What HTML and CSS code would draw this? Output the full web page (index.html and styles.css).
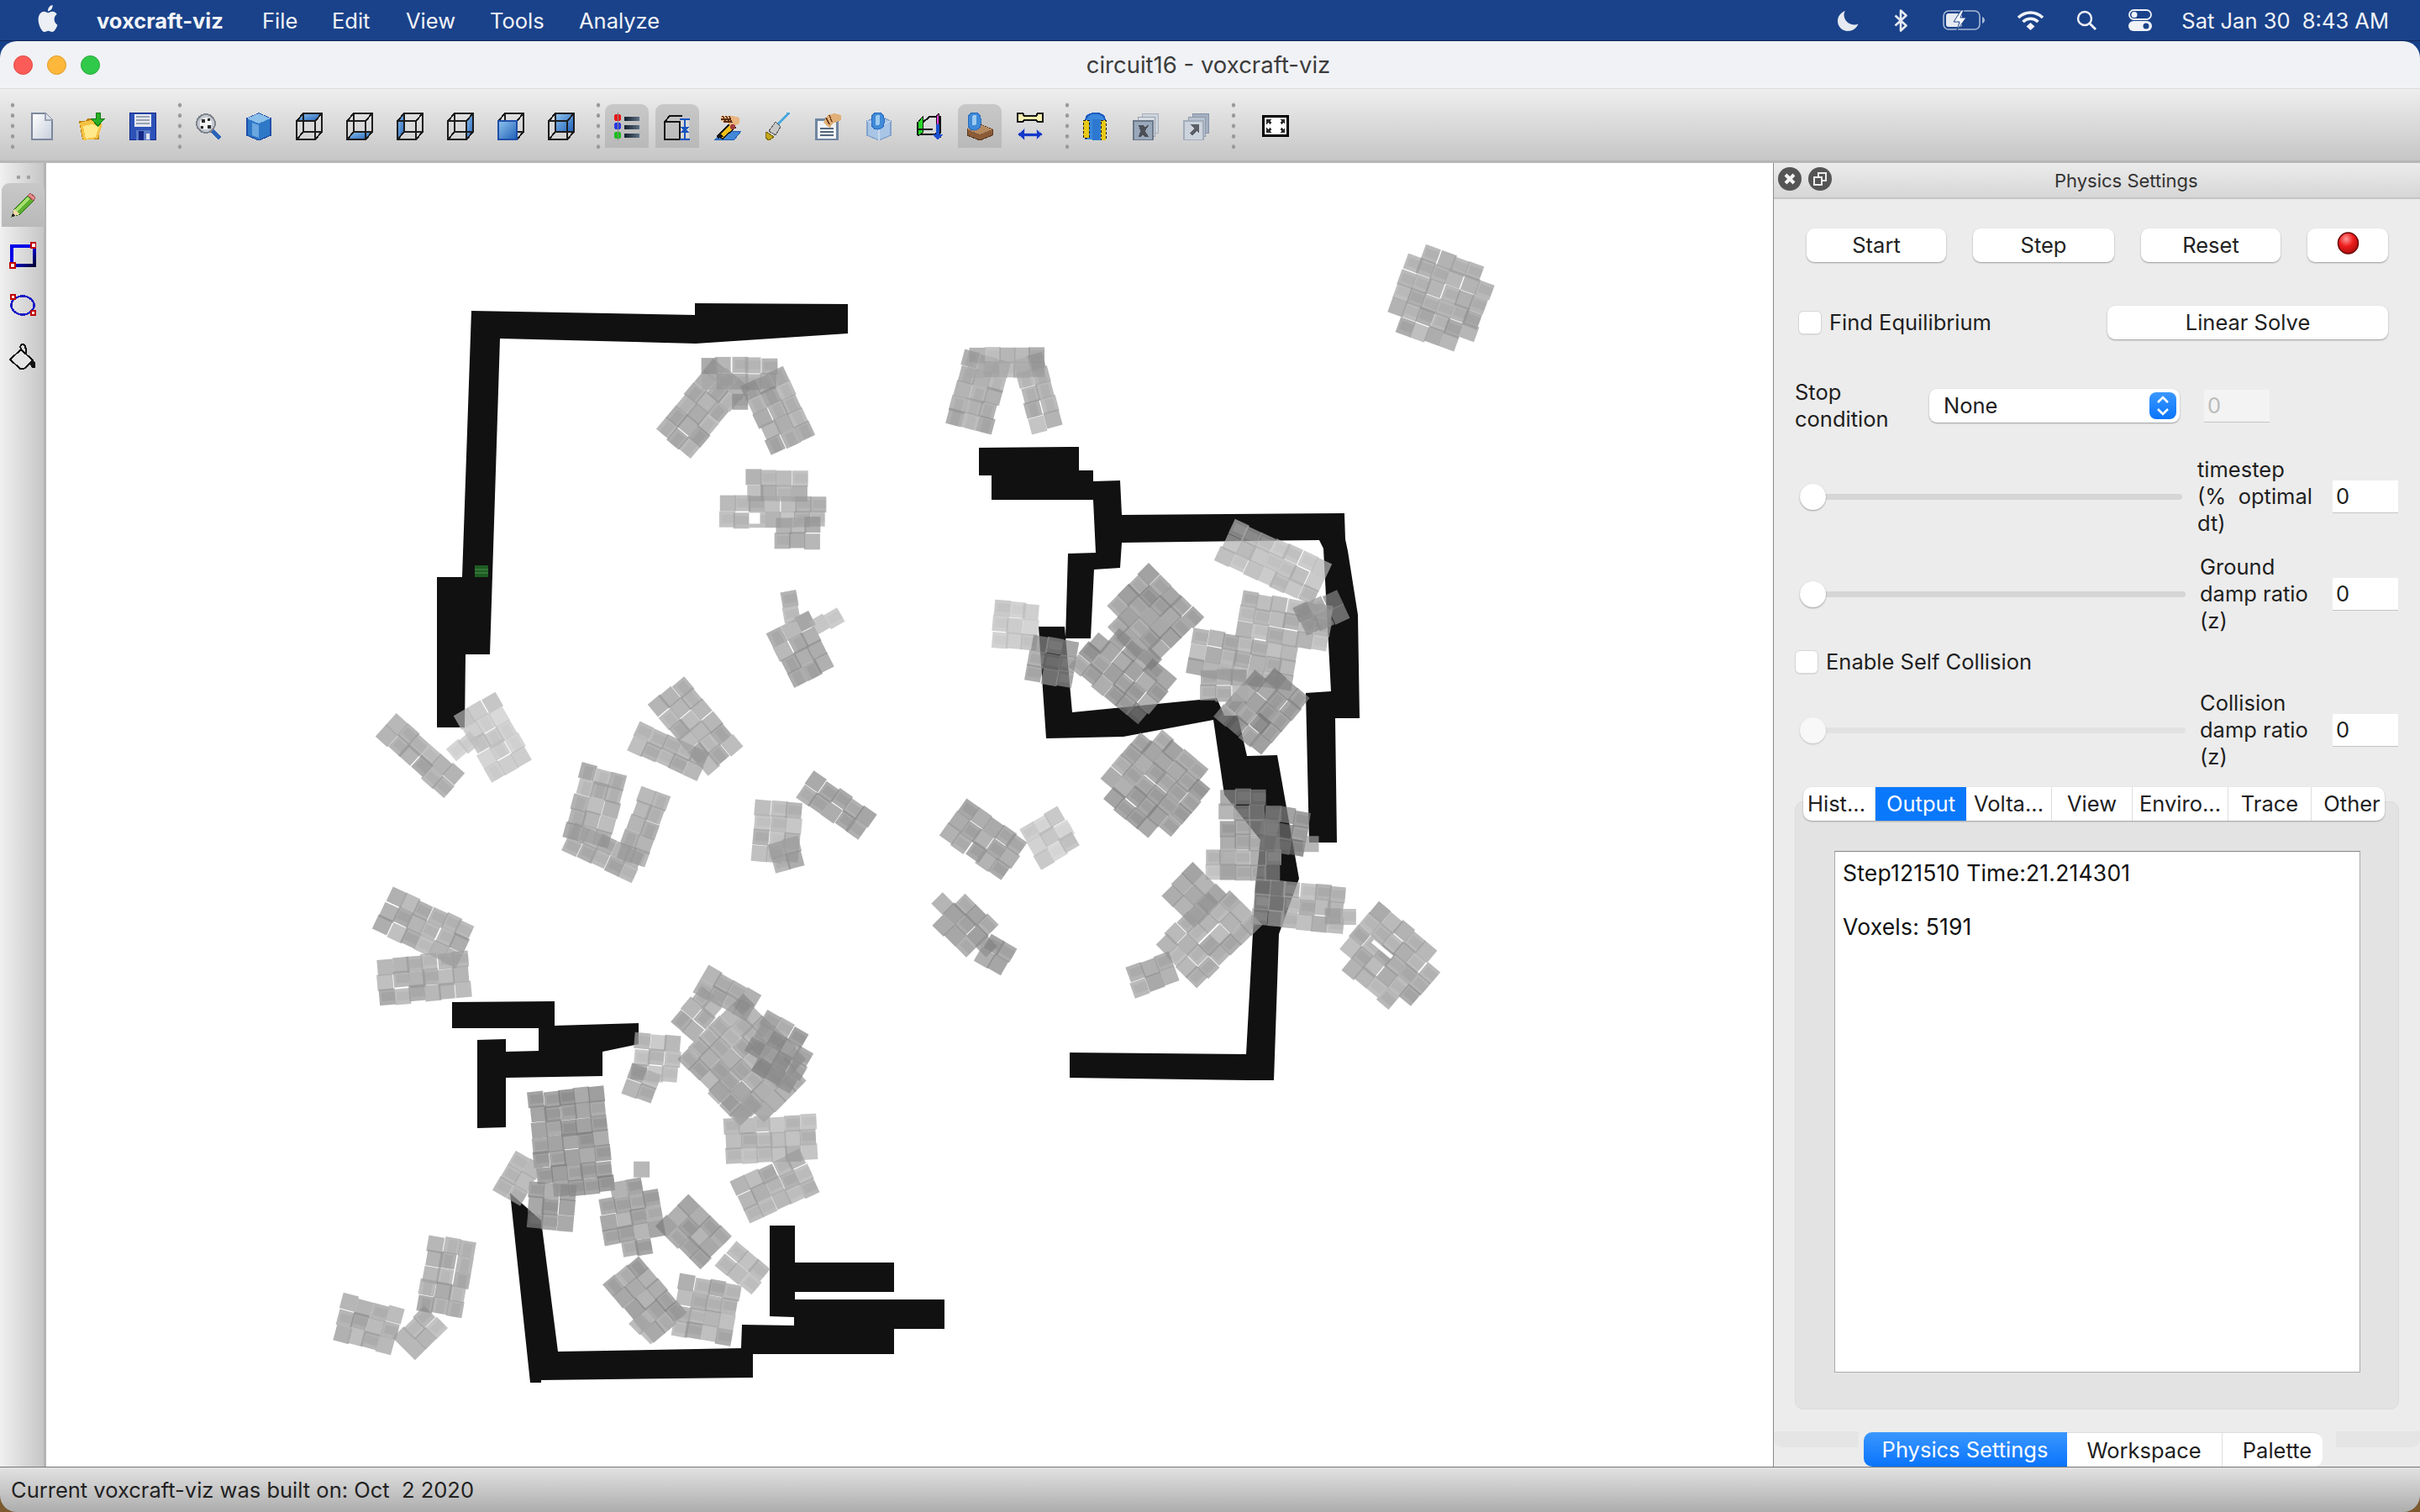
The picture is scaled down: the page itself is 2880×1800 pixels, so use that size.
FILE: index.html
```html
<!DOCTYPE html>
<html>
<head>
  <title>circuit16 - voxcraft-viz</title>
  <link rel="stylesheet" href="styles.css">
</head>
<body>

<!-- Shared icon shapes -->
<svg class="icon-defs" width="0" height="0">
  <defs>
    <linearGradient id="gBlue" x1="0" y1="0" x2="1" y2="1"><stop offset="0" stop-color="#8fc4ee"/><stop offset="1" stop-color="#1f5fb8"/></linearGradient>
    <linearGradient id="gPage" x1="0" y1="0" x2="1" y2="1"><stop offset="0" stop-color="#ffffff"/><stop offset="1" stop-color="#c6cfdc"/></linearGradient>
    <linearGradient id="gBar" x1="0" y1="0" x2="1" y2="0"><stop offset="0" stop-color="#12202e"/><stop offset="1" stop-color="#5d7084"/></linearGradient>
    <linearGradient id="gBlueBtn" x1="0" y1="0" x2="0" y2="1"><stop offset="0" stop-color="#3a97ff"/><stop offset="1" stop-color="#0a74fb"/></linearGradient>
    <linearGradient id="gRect" x1="0" y1="0" x2="1" y2="1"><stop offset="0.5" stop-color="#0000e8"/><stop offset="1" stop-color="#00003a"/></linearGradient>
    <radialGradient id="gRed" cx="0.4" cy="0.3" r="0.8"><stop offset="0" stop-color="#ff9a9a"/><stop offset="0.45" stop-color="#ee1c1c"/><stop offset="1" stop-color="#a00808"/></radialGradient>

    <g id="wire">
      <path d="M1 10h22v22H1zM9 1h22v22H9zM1 10l8-9M23 10l8-9M23 32l8-9M1 32l8-9" fill="none" stroke="#1c1c1c" stroke-width="2"/>
    </g>
    <symbol id="i-new" viewBox="0 0 32 33"><path d="M4 1h16l8 8v23H4z" fill="url(#gPage)" stroke="#7c879c" stroke-width="2"/><path d="M20 1v8h8" fill="#dfe3ea" stroke="#9aa3b4" stroke-width="1.5"/></symbol>
    <symbol id="i-open" viewBox="0 0 32 33">
      <path d="M0 10h8l2-3h14v25H4z" fill="#b9800f"/><path d="M1 12l13-3 14 5-6 17-17 2z" fill="#f5c343"/><path d="M5 16l10-2 9 3-4 12-12 2z" fill="#ffe98a"/>
      <path d="M20 0h5v7h6l-8.500 9-8.500-9h6z" fill="#27b027" stroke="#127a12"/>
    </symbol>
    <symbol id="i-save" viewBox="0 0 32 33">
      <rect x="0.5" y="0.5" width="31" height="32" fill="#2c52b8" stroke="#14298c"/><rect x="6" y="2" width="20" height="15" fill="#e4e8f0"/>
      <path d="M8 5h16M8 9h16M8 13h16" stroke="#9aa2b2" stroke-width="2"/><rect x="8" y="21" width="17" height="12" fill="#5c7cc8"/><rect x="11" y="22" width="6" height="11" fill="#142a86"/><rect x="20" y="25" width="4" height="7" fill="#dfe4ee"/>
    </symbol>
    <symbol id="i-zoom" viewBox="0 0 32 33">
      <circle cx="13" cy="13" r="11" fill="#c4c8d0" stroke="#80848c" stroke-width="2"/><circle cx="13" cy="13" r="7" fill="#f4f4f4"/>
      <path d="M8 8h4v4H8zM15 15h4v4h-4zM15 7h3v3h-3zM7 16h3v3H7z" fill="#2c2c2c"/><path d="M21 22l9 9" stroke="#2a64b8" stroke-width="5"/>
    </symbol>
    <symbol id="i-cube" viewBox="0 0 32 33">
      <path d="M16 1l14 6v20l-14 6-14-6V7z" fill="#2f78c8" stroke="#1f4fa8" stroke-width="1.5"/><path d="M16 1l14 6-14 6-14-6z" fill="#8cc0ea"/><path d="M8 12l8 3v15l-8-3z" fill="#6aa6e0"/>
    </symbol>
    <symbol id="i-top" viewBox="0 0 32 33"><path d="M1 10l8-9h22l-8 9z" fill="url(#gBlue)"/><use href="#wire"/></symbol>
    <symbol id="i-bottom" viewBox="0 0 32 33"><path d="M1 32l8-9h22l-8 9z" fill="url(#gBlue)"/><use href="#wire"/></symbol>
    <symbol id="i-left" viewBox="0 0 32 33"><path d="M1 10l8-9v22l-8 9z" fill="url(#gBlue)"/><use href="#wire"/></symbol>
    <symbol id="i-right" viewBox="0 0 32 33"><path d="M23 10l8-9v22l-8 9z" fill="url(#gBlue)"/><use href="#wire"/></symbol>
    <symbol id="i-front" viewBox="0 0 32 33"><use href="#wire"/><rect x="1" y="10" width="22" height="22" fill="url(#gBlue)" stroke="#1f4fa8" stroke-width="2"/></symbol>
    <symbol id="i-back" viewBox="0 0 32 33"><rect x="9" y="1" width="22" height="22" fill="url(#gBlue)"/><use href="#wire"/></symbol>
    <symbol id="i-beads" viewBox="0 0 32 33">
      <circle cx="5" cy="6" r="4.5" fill="#e81818"/><circle cx="5" cy="16" r="4.5" fill="#2a3ae0"/><circle cx="5" cy="27" r="4.5" fill="#18c018"/><path d="M5 0v33" stroke="#888" stroke-width="1"/>
      <rect x="13" y="5" width="18" height="5" fill="url(#gBar)"/><rect x="13" y="15" width="18" height="5" fill="url(#gBar)"/><rect x="13" y="25" width="18" height="5" fill="url(#gBar)"/>
    </symbol>
    <symbol id="i-size" viewBox="0 0 32 33">
      <path d="M1 11l6-7h15M1 11h18v21H1z" fill="none" stroke="#141414" stroke-width="2"/><rect x="20" y="9" width="10" height="21" fill="#d8d8d8"/>
      <path d="M24 9h-5v-2h12v2h-5v8h4l-5 6-5-6h4zM19 31h12v2H19zM25 18l5 6h-4v7h-2v-7h-4z" fill="#1856c0"/>
    </symbol>
    <symbol id="i-hand" viewBox="0 0 32 33">
      <path d="M1 32l9-10h22l-8 10z" fill="#4288d8" stroke="#1f5cb0"/><path d="M4 28l15-15 6 5-15 13z" fill="#f0c018" stroke="#1c1c1c" stroke-width="1.5"/><path d="M4 28l4-3 3 4-7 2z" fill="#181818"/>
      <path d="M8 4h14l8 2v7l-10 5-4-6-8-2z" fill="#e8b480"/><path d="M10 4l4 7M14 4l4 7M18 4l3 8M8 8h12M11 11h9" stroke="#5c2c10" stroke-width="1.5"/><circle cx="22" cy="17" r="3" fill="#a03c3c"/>
    </symbol>
    <symbol id="i-brush" viewBox="0 0 32 33">
      <path d="M29 0L16 14" stroke="#4aa8dc" stroke-width="3"/><path d="M13 11l6 6-6 10-8-5z" fill="#c8c8c8" stroke="#5c5c5c"/><path d="M2 23l9 6-6 4-4-3z" fill="#c4a818" stroke="#7c6a0c"/>
    </symbol>
    <symbol id="i-note" viewBox="0 0 32 33">
      <rect x="1.5" y="8.5" width="25" height="24" fill="#f0f2f6" stroke="#6f86a0" stroke-width="2.5"/><path d="M6 19h16M6 23h16M6 27h16" stroke="#54687e" stroke-width="2"/>
      <path d="M10 12l5-9 8-2 8 2v6l-10 4-3 5-4-2z" fill="#e0b078"/><path d="M13 6l4 8M17 3l3 8" stroke="#6c3c1c" stroke-width="1.5"/>
    </symbol>
    <symbol id="i-vox" viewBox="0 0 32 33">
      <path d="M16 4l14 6v17l-14 6-14-6V10z" fill="#a9c5e6" stroke="#82a2cc" stroke-width="1.5"/><path d="M16 16l14-6M16 16v17M16 16L2 10" stroke="#c6d8ee" stroke-width="1.5"/>
      <rect x="7" y="0" width="15" height="20" rx="7" fill="#3f8ad8" stroke="#2a6cc0"/><rect x="12" y="3" width="5" height="12" rx="2" fill="#9ccaf0"/>
    </symbol>
    <symbol id="i-bc" viewBox="0 0 32 33">
      <path d="M2 12h6l8-7h13v19l-8 2H2z" fill="none" stroke="#141414" stroke-width="2"/><path d="M2 12l6-7v19l-6 4z" fill="#28d828" stroke="#141414"/><path d="M27 1l-3 4v24h5z" fill="#ee40dc" stroke="#141414"/>
      <path d="M24 14h4v12h4l-6 7-6-7h4z" fill="#1a4ed0"/><path d="M2 20h18" stroke="#141414" stroke-width="2"/>
    </symbol>
    <symbol id="i-mat" viewBox="0 0 32 33">
      <path d="M16 14l15 6v7l-15 6-15-6v-7z" fill="#8a5c38" stroke="#5c3a20"/><path d="M16 14l15 6-15 6-15-6z" fill="#b68a60"/>
      <rect x="2" y="0" width="15" height="21" rx="7" fill="#3f8ad8" stroke="#2a6cc0"/><rect x="7" y="3" width="5" height="12" rx="2" fill="#9ccaf0"/>
    </symbol>
    <symbol id="i-beam" viewBox="0 0 32 33">
      <path d="M1 1h6l2 3h14l2-3h6v10h-6l-2-2H9l-2 2H1z" fill="#f6f0b0" stroke="#141414" stroke-width="2"/>
      <path d="M1 26l8-7v5h14v-5l8 7-8 7v-5H9v5z" fill="#1438c8" stroke="#b8bcd8"/>
    </symbol>
    <symbol id="i-arch" viewBox="0 0 32 33">
      <path d="M4 32V10C4 3 10 1 16 1s11 2 11 9v23" fill="#3a88dc" stroke="#1d5cc0" stroke-width="2"/><rect x="12" y="8" width="9" height="25" fill="#2e78d0"/>
      <path d="M1 9h7v21H1zM22 9h6v24h-6z" fill="#e8c818" stroke="#1c1c1c" stroke-dasharray="3 2"/>
    </symbol>
    <symbol id="i-stack" viewBox="0 0 32 33">
      <rect x="11" y="1" width="19" height="23" fill="#cdd3dc" stroke="#a8b0bc"/><rect x="6" y="5" width="20" height="23" fill="#d8dde4" stroke="#9aa2ae"/><rect x="1" y="10" width="23" height="23" fill="#9aa8bc" stroke="#6c7888" stroke-width="2"/>
      <path d="M7 15h5l3 3 2-3h2l-4 7 4 7H14l-2-3-3 3H7l2-7z" fill="#4c5056"/>
    </symbol>
    <symbol id="i-stack2" viewBox="0 0 32 33">
      <rect x="11" y="1" width="19" height="23" fill="#a4b0c0" stroke="#8492a6"/><rect x="6" y="5" width="20" height="23" fill="#b8c2d0" stroke="#8e9aac"/><rect x="1" y="10" width="23" height="23" fill="#ccd3dc" stroke="#a2acba" stroke-width="2"/>
      <path d="M8 14h11v11l-3-3-5 6-3-3 5-6z" fill="#5c6066"/>
    </symbol>
    <symbol id="i-full" viewBox="0 0 32 26">
      <rect x="1.5" y="1.5" width="29" height="23" fill="#fff" stroke="#000" stroke-width="3"/>
      <path d="M5 5h6l-2 2 2 2-2 2-2-2-2 2zM27 5h-6l2 2-2 2 2 2 2-2 2 2zM5 21h6l-2-2 2-2-2-2-2 2-2-2zM27 21h-6l2-2-2-2 2-2 2 2 2-2z" fill="#2a2a2a"/>
    </symbol>
    <symbol id="i-pencil" viewBox="0 0 32 33">
      <path d="M3 30l3-9 16-16 7 6-16 16z" fill="#5cb030" stroke="#2c6c18"/><path d="M8 23L23 8" stroke="#a8e070" stroke-width="3"/><path d="M22 5l3-3 6 5-2 4z" fill="#e88c8c" stroke="#a05050"/><path d="M3 30l3-9 7 6z" fill="#f0d8a8"/><path d="M3 30l1-4 3 3z" fill="#222"/>
    </symbol>
    <symbol id="i-rect" viewBox="0 0 32 33">
      <rect x="2.5" y="4.500" width="27" height="23" fill="none" stroke="url(#gRect)" stroke-width="4"/>
      <rect x="26" y="1" width="6" height="6" fill="#fff" stroke="#c00000" stroke-width="2"/><rect x="1" y="25" width="6" height="6" fill="#fff" stroke="#c00000" stroke-width="2"/>
    </symbol>
    <symbol id="i-oval" viewBox="0 0 32 33">
      <ellipse cx="16" cy="15.500" rx="13.500" ry="11" fill="none" stroke="#1c1cc8" stroke-width="2.500"/>
      <rect x="2" y="3" width="5" height="5" fill="#fff" stroke="#c00000" stroke-width="2"/><rect x="26" y="22" width="5" height="5" fill="#fff" stroke="#c00000" stroke-width="2"/>
    </symbol>
    <symbol id="i-fill" viewBox="0 0 32 33">
      <path d="M1 20L14 8l14 13-9 9c-2 1-4 2-6 1z" fill="#e4e4e4" stroke="#111" stroke-width="2"/><path d="M14 8c-2-4 0-7 3-6s3 6 3 12" fill="none" stroke="#111" stroke-width="2"/><path d="M27 19l4 5v6h-4l-2-4z" fill="#111"/>
    </symbol>
  </defs>
</svg>

<div class="desktop">

  <!-- Menu bar -->
  <div class="menubar">
    <svg class="apple" viewBox="0 0 24 24" width="28" height="32" preserveAspectRatio="none"><path fill="#eceff4" d="M12.152 6.896c-.948 0-2.415-1.078-3.96-1.04-2.04.027-3.91 1.183-4.961 3.014-2.117 3.675-.546 9.103 1.519 12.09 1.013 1.454 2.208 3.09 3.792 3.039 1.52-.065 2.09-.987 3.935-.987 1.831 0 2.35.987 3.96.948 1.637-.026 2.676-1.48 3.676-2.948 1.156-1.688 1.636-3.325 1.662-3.415-.039-.013-3.182-1.221-3.22-4.857-.026-3.04 2.48-4.494 2.597-4.559-1.429-2.09-3.623-2.324-4.39-2.376-2-.156-3.675 1.09-4.61 1.09zM15.53 3.83c.843-1.012 1.4-2.427 1.245-3.83-1.207.052-2.662.805-3.532 1.818-.78.896-1.454 2.338-1.273 3.714 1.338.104 2.715-.688 3.559-1.701"/></svg>
    <span class="menu-app">voxcraft-viz</span>
    <span class="menu-item">File</span>
    <span class="menu-item">Edit</span>
    <span class="menu-item">View</span>
    <span class="menu-item">Tools</span>
    <span class="menu-item">Analyze</span>
    <div class="menu-status">
      <svg class="st-moon" width="25" height="25" viewBox="0 0 25 25"><path fill="#e6eaf2" d="M9 1C3.500 3 0 7.500 0 13c0 6.600 5.400 12 12 12 5.500 0 10.500-3.500 12.500-8.500-1.500.6-3 .9-4.500.9C13 17.400 7.500 12 7.500 5.400 7.500 3.800 8 2.300 9 1z"/></svg>
      <svg class="st-bt" width="17" height="27" viewBox="0 0 17 27"><path fill="none" stroke="#e6eaf2" stroke-width="2.600" stroke-linejoin="round" d="M1.500 7.500l13 12-6.500 6V1.500l6.500 6-13 12"/></svg>
      <svg width="50" height="24" viewBox="0 0 50 24">
        <rect x="1" y="1" width="43" height="22" rx="6" fill="none" stroke="#a9b8d6" stroke-width="1.600"/><path d="M47 8c2 1 3 2.500 3 4s-1 3-3 4z" fill="#a9b8d6"/>
        <rect x="4" y="4" width="19" height="16" rx="3" fill="#e6eaf2"/><path d="M22 0l-9 14h7l-3 10 11-15h-7l4-9z" fill="#f2f4f8" stroke="#1a4289"/>
      </svg>
      <svg width="33" height="24" viewBox="0 0 33 24"><path fill="none" stroke="#f0f2f8" stroke-width="3.600" d="M2 9c8.500-8 20.500-8 29 0M7.500 14c5.500-5 12.500-5 18 0"/><path fill="#f0f2f8" d="M16.500 15l-5 4.500 5 4.500 5-4.500z"/></svg>
      <svg width="24" height="24" viewBox="0 0 24 24"><circle cx="10" cy="10" r="8" fill="none" stroke="#f0f2f8" stroke-width="2.400"/><path d="M16 16l7 7" stroke="#f0f2f8" stroke-width="2.800"/></svg>
      <svg width="28" height="26" viewBox="0 0 28 26">
        <rect x="1" y="1" width="26" height="11" rx="5.500" fill="none" stroke="#f0f2f8" stroke-width="1.800"/><circle cx="7" cy="6.500" r="3.500" fill="#f0f2f8"/>
        <rect x="0" y="14" width="28" height="12" rx="6" fill="#f0f2f8"/><circle cx="21" cy="20" r="3.500" fill="#1a4289"/>
      </svg>
      <span class="st-clock">Sat Jan 30&nbsp;&nbsp;8:43 AM</span>
    </div>
  </div>

  <div class="window">

    <!-- Title bar -->
    <div class="titlebar">
      <div class="lights">
        <span class="light light-red"></span>
        <span class="light light-yellow"></span>
        <span class="light light-green"></span>
      </div>
      <div class="win-title">circuit16 - voxcraft-viz</div>
      <div></div>
    </div>

    <!-- Main tool bar -->
    <div class="toolbar">
      <span class="grip"></span>
      <span class="tb-btn"><svg class="ico"><use href="#i-new"/></svg></span>
      <span class="tb-btn"><svg class="ico"><use href="#i-open"/></svg></span>
      <span class="tb-btn"><svg class="ico"><use href="#i-save"/></svg></span>
      <span class="grip grip-gap"></span>
      <span class="tb-btn"><svg class="ico"><use href="#i-zoom"/></svg></span>
      <span class="tb-btn"><svg class="ico"><use href="#i-cube"/></svg></span>
      <span class="tb-btn"><svg class="ico"><use href="#i-top"/></svg></span>
      <span class="tb-btn"><svg class="ico"><use href="#i-bottom"/></svg></span>
      <span class="tb-btn"><svg class="ico"><use href="#i-left"/></svg></span>
      <span class="tb-btn"><svg class="ico"><use href="#i-right"/></svg></span>
      <span class="tb-btn"><svg class="ico"><use href="#i-front"/></svg></span>
      <span class="tb-btn"><svg class="ico"><use href="#i-back"/></svg></span>
      <span class="grip grip-gap"></span>
      <span class="tb-btn on"><svg class="ico"><use href="#i-beads"/></svg></span>
      <span class="tb-btn on"><svg class="ico"><use href="#i-size"/></svg></span>
      <span class="tb-btn"><svg class="ico"><use href="#i-hand"/></svg></span>
      <span class="tb-btn"><svg class="ico"><use href="#i-brush"/></svg></span>
      <span class="tb-btn"><svg class="ico"><use href="#i-note"/></svg></span>
      <span class="tb-btn"><svg class="ico"><use href="#i-vox"/></svg></span>
      <span class="tb-btn"><svg class="ico"><use href="#i-bc"/></svg></span>
      <span class="tb-btn on"><svg class="ico"><use href="#i-mat"/></svg></span>
      <span class="tb-btn"><svg class="ico"><use href="#i-beam"/></svg></span>
      <span class="grip grip-gap"></span>
      <span class="tb-btn"><svg class="ico"><use href="#i-arch"/></svg></span>
      <span class="tb-btn"><svg class="ico"><use href="#i-stack"/></svg></span>
      <span class="tb-btn"><svg class="ico"><use href="#i-stack2"/></svg></span>
      <span class="grip grip-gap"></span>
      <span class="tb-btn tb-full"><svg class="ico-full"><use href="#i-full"/></svg></span>
    </div>

    <div class="workarea">

      <!-- Drawing tools on the left -->
      <div class="sidetools">
        <span class="side-grip"></span>
        <span class="side-btn on"><svg class="ico"><use href="#i-pencil"/></svg></span>
        <span class="side-btn"><svg class="ico"><use href="#i-rect"/></svg></span>
        <span class="side-btn"><svg class="ico"><use href="#i-oval"/></svg></span>
        <span class="side-btn"><svg class="ico"><use href="#i-fill"/></svg></span>
      </div>

      <!-- 3D view: coordinates are the window's own pixels -->
      <div class="viewport">
        <svg id="scene" class="scene" viewBox="55 194 2055 1552" width="2055" height="1552">
          <g class="rails">
            <polygon points="561,370 827,375 827,361 1009,362 1009,397 828,409 595,403 583,779 554,779 553,866 520,866 520,687 550,687"/>
            <polygon points="1165,533 1284,532 1284,560 1301,560 1301,573 1333,572 1335,613 1600,611 1601,642 1604,656 1616,732 1618,855 1589,855 1591,1003 1558,1003 1554,825 1584,823 1575,653 1570,643 1335,646 1333,676 1302,678 1298,760 1268,760 1271,659 1304,658 1301,595 1180,595 1180,566 1165,566"/>
            <polygon points="1236,746 1267,746 1276,848 1448,831 1457,852 1473,852 1484,900 1520,899 1546,1046 1522,1112 1516,1286 1484,1286 1273,1283 1273,1253 1483,1255 1494,1056 1500,1000 1457,946 1444,857 1337,877 1245,879 1240,806"/>
            <polygon points="538,1193 660,1192 660,1221 760,1218 760,1243 717,1252 717,1281 602,1283 602,1342 568,1343 568,1238 602,1237 602,1252 641,1251 641,1224 538,1224"/>
            <polygon points="607,1420 644,1453 664,1609 882,1605 883,1577 945,1578 945,1568 916,1567 916,1459 946,1459 946,1503 1064,1503 1064,1538 946,1538 946,1547 1124,1547 1124,1582 1064,1582 1064,1612 896,1612 896,1640 644,1643 644,1646 631,1646"/>
          </g>
          <g class="marker">
            <rect x="565" y="673" width="16" height="14"/>
            <path d="M565 678h16M565 682h16"/>
          </g>
          <g id="voxels"></g>
        </svg>
      </div>

      <!-- Physics Settings dock -->
      <div class="panel">
        <div class="panel-title">
          <span class="dock-btn"><svg width="28" height="28" viewBox="0 0 28 28"><circle cx="14" cy="14" r="14" fill="#555"/><path d="M9 9l10 10M19 9L9 19" stroke="#f4f4f4" stroke-width="4"/></svg></span>
          <span class="dock-btn"><svg width="28" height="28" viewBox="0 0 28 28"><circle cx="14" cy="14" r="14" fill="#555"/><rect x="12" y="7" width="9" height="9" fill="none" stroke="#eee" stroke-width="2"/><rect x="7" y="12" width="9" height="9" fill="#555" stroke="#eee" stroke-width="2"/></svg></span>
          <span class="panel-name">Physics Settings</span>
        </div>

        <div class="row-buttons">
          <button class="mac-btn btn-start">Start</button>
          <button class="mac-btn btn-step">Step</button>
          <button class="mac-btn btn-reset">Reset</button>
          <button class="mac-btn btn-rec"><svg width="27" height="27" viewBox="0 0 27 27"><ellipse cx="13.500" cy="13.500" rx="12" ry="12.500" fill="url(#gRed)" stroke="#6c0606" stroke-width="1.500"/></svg></button>
        </div>

        <div class="row-find">
          <span class="check"></span>
          <span class="check-text">Find Equilibrium</span>
          <button class="mac-btn btn-solve">Linear Solve</button>
        </div>

        <div class="row-stop">
          <span class="stop-label">Stop<br>condition</span>
          <span class="combo">None
            <svg class="combo-arrow" width="32" height="32" viewBox="0 0 32 32"><rect width="32" height="32" rx="8" fill="url(#gBlueBtn)"/><path d="M10 12l6-6 6 6M10 20l6 6 6-6" fill="none" stroke="#fff" stroke-width="2.600"/></svg>
          </span>
          <span class="line-edit line-off">0</span>
        </div>

        <div class="row-slider">
          <span class="slider"><span class="knob"></span></span>
          <span class="slider-label">timestep<br>(%&nbsp;&nbsp;optimal<br>dt)</span>
          <span class="line-edit">0</span>
        </div>

        <div class="row-slider row-slider-wide">
          <span class="slider"><span class="knob"></span></span>
          <span class="slider-label">Ground<br>damp ratio<br>(z)</span>
          <span class="line-edit">0</span>
        </div>

        <div class="row-collide">
          <span class="check"></span>
          <span class="check-text">Enable Self Collision</span>
        </div>

        <div class="row-slider row-slider-wide row-off">
          <span class="slider"><span class="knob"></span></span>
          <span class="slider-label">Collision<br>damp ratio<br>(z)</span>
          <span class="line-edit">0</span>
        </div>

        <div class="tabs">
          <span class="tab tab-first">Hist...</span>
          <span class="tab tab-on">Output</span>
          <span class="tab">Volta...</span>
          <span class="tab">View</span>
          <span class="tab">Enviro...</span>
          <span class="tab">Trace</span>
          <span class="tab tab-last">Other</span>
        </div>
        <div class="tab-page">
          <div class="output">Step121510 Time:21.214301<br><br>Voxels: 5191</div>
        </div>

        <div class="dock-tabs">
          <span class="dock-strip dock-strip-left"></span>
          <div class="dock-bar">
            <span class="dock-tab dock-tab-on">Physics Settings</span>
            <span class="dock-tab">Workspace</span>
            <span class="dock-tab">Palette</span>
          </div>
          <span class="dock-strip dock-strip-right"></span>
        </div>
      </div>
    </div>

    <div class="statusbar">Current voxcraft-viz was built on: Oct&nbsp;&nbsp;2 2020</div>
  </div>
</div>

<script src="voxels.js"></script>
</body>
</html>
```
FILE: styles.css
```css
/* Apply a CSS reset to remove default margin and padding */
* {
  margin: 0;
  padding: 0;
  box-sizing: border-box;
}

body {
  width: 2880px;
  height: 1800px;
  overflow: hidden;
  font-family: Inter, "Liberation Sans", sans-serif;
  font-size: 25.500px;
  color: #1e1e1e;
}

.icon-defs {
  position: absolute;
}

/* Blue wallpaper behind the menu bar, brown behind the lower corners */
.desktop {
  height: 1800px;
  display: flex;
  flex-direction: column;
  background: linear-gradient(#17408a 0 50%, #7c5a30 50% 100%);
}

/* Styles for the menu bar */
.menubar {
  height: 49px;
  flex: none;
  display: flex;
  align-items: center;
  padding-left: 43px;
  background: #1a428a;
  color: #f2f4f8;
  border-bottom: 1px solid #12285a;
}

.apple {
  margin-right: 44px;
  margin-top: -4px;
}

.menu-app {
  font-weight: 700;
  width: 197px;
}

.menu-item {
  width: 83px;
}

.menu-item:nth-of-type(3) {
  width: 88px;
}

.menu-item:nth-of-type(4) {
  width: 100px;
}

.menu-item:nth-of-type(5) {
  width: 106px;
}

.menu-status {
  margin-left: auto;
  margin-right: 37px;
  display: flex;
  align-items: center;
  gap: 38px;
}

.st-moon {
  margin-right: 4px;
}

.st-bt {
  margin-right: 3px;
}

.st-clock {
  margin-left: -3px;
  white-space: nowrap;
}

/* Styles for the application window */
.window {
  flex: 1;
  display: flex;
  flex-direction: column;
  min-height: 0;
  border-radius: 20px;
  overflow: hidden;
}

.titlebar {
  height: 57px;
  flex: none;
  display: grid;
  grid-template-columns: 1fr auto 1fr;
  align-items: center;
  background: #f1f2f6;
  border-bottom: 1px solid #dcdcdc;
}

.lights {
  display: flex;
  gap: 17px;
  padding-left: 16px;
}

.light {
  width: 23px;
  height: 23px;
  border-radius: 50%;
}

.light-red {
  background: #fc5c57;
  border: 1px solid #e0443e;
}

.light-yellow {
  background: #fdb83c;
  border: 1px solid #de9b26;
}

.light-green {
  background: #30c94a;
  border: 1px solid #22a836;
}

.win-title {
  font-size: 27.500px;
  color: #3c3c3c;
  margin-right: 4px;
}

/* Styles for the tool bars */
.toolbar {
  height: 88px;
  flex: none;
  display: flex;
  align-items: center;
  padding: 3px 0 0 11px;
  background: linear-gradient(#eeeeee, #c6c6c6);
  border-bottom: 3px solid #b6b6b6;
}

.grip {
  width: 8px;
  height: 62px;
  margin-right: 1px;
  background: radial-gradient(circle, #9a9a9a 2px, transparent 2.6px) 0 0 / 8px 12.400px repeat-y;
}

.grip-gap {
  margin-left: 10px;
  margin-right: 0;
}

.tb-btn {
  width: 52px;
  height: 52px;
  margin: 0 4px;
  display: flex;
  align-items: center;
  justify-content: center;
  border-radius: 9px 9px 0 0;
}

.on {
  background: linear-gradient(#c8c8c8, #b9b9b9);
}

.tb-full {
  margin-left: 20px;
}

.ico {
  width: 32px;
  height: 33px;
  shape-rendering: crispEdges;
}

.ico-full {
  width: 32px;
  height: 26px;
  shape-rendering: crispEdges;
}

.workarea {
  flex: 1;
  min-height: 0;
  display: flex;
}

.sidetools {
  width: 55px;
  flex: none;
  display: flex;
  flex-direction: column;
  align-items: center;
  background: linear-gradient(90deg, #f0f0f0, #c6c6c6);
  border-right: 3px solid #b4b4b4;
}

.side-grip {
  width: 20px;
  height: 6px;
  margin: 14px 0 4px;
  background: radial-gradient(circle, #a0a0a0 2px, transparent 2.6px) 0 0 / 12px 6px repeat-x;
}

.side-btn {
  width: 51px;
  height: 52px;
  margin: 0 0 8px 2px;
  display: flex;
  align-items: center;
  justify-content: center;
  border-radius: 9px 9px 0 0;
}

.viewport {
  width: 2055px;
  flex: none;
  background: #fff;
}

.scene {
  display: block;
}

.rails polygon {
  fill: #111;
}

.marker rect {
  fill: #1f5c22;
}

.marker path {
  stroke: #3c8040;
  stroke-width: 1.500;
  fill: none;
}

/* Styles for the Physics Settings dock */
.panel {
  flex: 1;
  display: flex;
  flex-direction: column;
  background: #ececec;
  border-left: 1px solid #8a8a8a;
}

.panel-title {
  height: 43px;
  flex: none;
  display: flex;
  align-items: center;
  padding-left: 5px;
  gap: 8px;
  background: linear-gradient(#ececec, #d6d6d6);
  border-bottom: 2px solid #c4c4c4;
  margin-bottom: 35px;
}

.dock-btn {
  display: flex;
  margin-top: -3px;
}

.panel-name {
  font-size: 22px;
  color: #333;
  margin-left: 257px;
}

.mac-btn {
  height: 40px;
  padding-bottom: 2px;
  font: inherit;
  color: #222;
  background: #fff;
  border: none;
  border-radius: 9px;
  box-shadow: 0 1px 2px rgba(0, 0, 0, .35);
  flex: none;
}

.row-buttons {
  display: flex;
  gap: 32px;
  padding-left: 39px;
}

.btn-start,
.btn-reset {
  width: 166px;
}

.btn-step {
  width: 168px;
}

.btn-rec {
  width: 96px;
  display: flex;
  align-items: flex-start;
  justify-content: center;
  padding: 4px 0 0;
}

.row-find {
  display: flex;
  align-items: center;
  margin-top: 52px;
  padding-left: 29px;
}

.check {
  width: 28px;
  height: 28px;
  flex: none;
  background: #fff;
  border: 1px solid #d6d6d6;
  border-radius: 6px;
  box-shadow: 0 1px 1px rgba(0, 0, 0, .08);
}

.check-text {
  margin-left: 9px;
  line-height: 28px;
}

.btn-solve {
  width: 334px;
  margin-left: auto;
  margin-right: 38px;
}

.row-stop {
  display: flex;
  align-items: center;
  margin-top: 47px;
  padding-left: 25px;
}

.stop-label {
  width: 160px;
  line-height: 32px;
}

.combo {
  width: 298px;
  height: 40px;
  display: flex;
  align-items: center;
  justify-content: space-between;
  padding: 0 4px 2px 17px;
  background: #fff;
  border-radius: 9px;
  box-shadow: 0 1px 2px rgba(0, 0, 0, .35);
}

.combo-arrow {
  margin-bottom: -2px;
}

.line-edit {
  width: 78px;
  height: 39px;
  flex: none;
  padding-left: 4px;
  line-height: 37px;
  background: #fff;
  border-bottom: 1px solid #c4c4c4;
}

.line-off {
  margin-left: 29px;
  background: #f3f3f3;
  color: #bcbcbc;
}

.row-slider {
  display: flex;
  align-items: center;
  margin-top: 28px;
  padding-left: 31px;
}

.row-slider-wide {
  margin-top: 20px;
}

.slider {
  width: 455px;
  height: 7px;
  flex: none;
  display: flex;
  align-items: center;
  background: #d6d6d6;
  border-radius: 3px;
  margin-right: 18px;
}

.row-slider-wide .slider {
  width: 459px;
  margin-right: 17px;
}

.knob {
  width: 31px;
  height: 31px;
  border-radius: 50%;
  background: #fff;
  box-shadow: 0 1px 2px rgba(0, 0, 0, .35);
}

.slider-label {
  width: 161px;
  line-height: 32px;
  flex: none;
}

.row-slider-wide .slider-label {
  width: 158px;
}

.row-off .slider {
  background: #e2e2e2;
}

.row-off .knob {
  background: #f8f8f8;
  box-shadow: 0 1px 2px rgba(0, 0, 0, .2);
}

.row-collide {
  display: flex;
  align-items: center;
  margin-top: 19px;
  padding-left: 25px;
}

.row-collide + .row-slider {
  margin-top: 19px;
}

/* Styles for the inner tabs */
.tabs {
  width: 692px;
  height: 40px;
  flex: none;
  display: grid;
  grid-template-columns: 86px 108px 102px 96px 114px 99px 87px;
  margin: 20px 0 0 35px;
  background: #fff;
  border-radius: 10px;
  box-shadow: 0 1px 2px rgba(0, 0, 0, .3);
  position: relative;
}

.tab {
  display: flex;
  align-items: center;
  justify-content: center;
  padding-bottom: 2px;
  white-space: nowrap;
  border-right: 1px solid #dedede;
}

.tab-first {
  padding-right: 6px;
}

.tab-last {
  border-right: none;
  padding-left: 9px;
}

.tab-on {
  background: #0a78fb;
  color: #fff;
  border-right: none;
}

.tab-page {
  width: 719px;
  height: 724px;
  flex: none;
  margin: -23px 0 0 25px;
  padding: 58px 0 0 46px;
  background: #e3e3e3;
  border: 1px solid #dcdcdc;
  border-radius: 10px;
}

.output {
  width: 626px;
  height: 621px;
  padding: 9px 9px;
  font-size: 26.500px;
  letter-spacing: .2px;
  line-height: 32px;
  color: #111;
  background: #fff;
  border: 1px solid #ababab;
  border-top-color: #858585;
}

/* Styles for the bottom dock tabs */
.dock-tabs {
  display: flex;
  margin-top: 26px;
  height: 42px;
}

.dock-strip {
  height: 19px;
  flex: 1;
  background: #e5e5e5;
}

.dock-strip-left {
  border-bottom-left-radius: 10px;
}

.dock-strip-right {
  border-bottom-right-radius: 10px;
}

.dock-bar {
  width: 568px;
  flex: none;
  display: grid;
  grid-template-columns: 242px 185px 119px;
  padding: 1px 11px 0 6px;
  background: #ececec;
}

.dock-tab {
  display: flex;
  align-items: center;
  justify-content: center;
  height: 41px;
  background: #fff;
  border-right: 1px solid #dedede;
  border-top: 1px solid #dcdcdc;
}

.dock-tab:last-child {
  border-right: none;
  border-radius: 0 10px 10px 0;
  padding-left: 12px;
}

.dock-tab-on {
  background: linear-gradient(#3a97ff, #0a74fb);
  color: #fff;
  border: none;
  border-radius: 10px 0 0 10px;
}

/* Styles for the status bar */
.statusbar {
  height: 54px;
  flex: none;
  display: flex;
  align-items: center;
  padding-left: 13px;
  color: #222;
  background: linear-gradient(#e2e2e2, #adadad);
  border-top: 1px solid #777;
}
```
FILE: voxels.js
```js
// Soft voxel robots in the 3D view. Each part is a block of cubes:
// [center x, center y, length, width, angle, gray, round]
var parts = [
  // arch, top middle
  [835, 487, 100, 55, 130, 148], [880, 445, 85, 30, 0, 153], [925, 490, 95, 45, 65, 148], [881, 478, 18, 20, 0, 148],
  // blob with a gap
  [925, 578, 70, 30, 0, 158], [920, 610, 118, 42, 0, 158], [950, 635, 55, 40, 0, 153],
  // small cluster under it
  [953, 774, 75, 60, 63, 143], [941, 723, 25, 30, -10, 158], [985, 740, 30, 16, -30, 173],
  // L shape
  [827, 865, 110, 50, 50, 153], [795, 895, 90, 40, 25, 158],
  // U shape
  [708, 960, 80, 50, 105, 153], [765, 985, 90, 40, 110, 153], [718, 1015, 90, 40, 25, 153],
  // pair next to the U
  [925, 990, 60, 70, 5, 163], [936, 1018, 35, 30, -15, 148], [996, 960, 85, 40, 35, 138],
  // pair under the first rail
  [500, 900, 115, 38, 42, 153], [587, 878, 80, 60, 60, 188], [552, 888, 30, 20, -40, 193],
  // ball, top right
  [1714, 356, 112, 112, 20, 153, 1],
  // second arch
  [1163, 468, 95, 48, 105, 153], [1199, 432, 80, 30, 0, 158], [1234, 468, 90, 40, 75, 158],
  // inside the second rail
  [1515, 670, 130, 60, 25, 173], [1529, 740, 110, 55, 10, 163], [1573, 730, 50, 35, -25, 138],
  [1368, 735, 85, 90, 45, 133], [1337, 801, 105, 70, 40, 133],
  [1209, 745, 55, 60, 5, 188], [1252, 788, 55, 50, 10, 138],
  [1479, 786, 130, 55, 10, 153], [1502, 842, 85, 70, 130, 128], [1457, 816, 50, 40, 0, 153],
  [1375, 934, 100, 105, 40, 138, 1],
  [1488, 995, 75, 110, 0, 143], [1529, 990, 45, 50, 10, 118], [1560, 1005, 20, 20, 0, 158], [1453, 1030, 40, 40, 0, 173],
  [1421, 1066, 60, 50, -45, 138], [1439, 1112, 100, 70, -45, 153], [1372, 1161, 45, 30, -20, 148],
  [1546, 1079, 105, 55, 5, 158], [1595, 1092, 35, 18, 0, 158],
  [1654, 1143, 110, 90, 40, 153],
  [1171, 1000, 90, 60, 35, 143], [1250, 997, 60, 50, -30, 188],
  [1149, 1102, 95, 60, 45, 138, 1], [1185, 1138, 35, 30, 30, 143],
  // lower left group
  [505, 1105, 110, 45, 25, 153], [505, 1165, 115, 45, -5, 153],
  [782, 1260, 50, 60, 5, 168], [763, 1290, 30, 30, 20, 158],
  [865, 1183, 70, 40, 30, 148], [831, 1207, 60, 35, -50, 153],
  [889, 1267, 120, 100, 45, 148], [928, 1253, 70, 70, 30, 138], [874, 1310, 45, 30, 45, 158],
  [680, 1360, 95, 130, -6, 128], [656, 1437, 60, 50, 5, 133], [617, 1403, 35, 50, 30, 158],
  [918, 1357, 100, 55, -3, 163], [923, 1413, 95, 55, -25, 158],
  [753, 1450, 75, 90, -10, 143, 1], [765, 1393, 18, 22, 0, 158],
  [826, 1467, 70, 45, 45, 138], [768, 1547, 95, 60, 50, 138], [840, 1560, 70, 65, 10, 153],
  [884, 1510, 50, 40, 40, 168], [768, 1583, 40, 25, 45, 158],
  [438, 1577, 70, 60, 15, 153], [501, 1587, 60, 40, -45, 158], [530, 1520, 90, 50, 100, 153]
];

// Small white gaps that show through the blocks
var gaps = [[898, 617, 13, 13, 0], [1645, 1130, 30, 5, 40]];

var CELL = 18;
var NS = "http://www.w3.org/2000/svg";
var layer = document.getElementById("voxels");

// Fixed seed so the picture is the same on every load
var seed = 17;
function rnd() {
  seed = (seed * 16807) % 2147483647;
  return seed / 2147483647;
}

function addRect(group, x, y, w, h, fill, alpha) {
  var r = document.createElementNS(NS, "rect");
  r.setAttribute("x", x);
  r.setAttribute("y", y);
  r.setAttribute("width", w);
  r.setAttribute("height", h);
  r.setAttribute("fill", fill);
  r.setAttribute("fill-opacity", alpha);
  group.appendChild(r);
}

parts.forEach(function(p) {
  var group = document.createElementNS(NS, "g");
  group.setAttribute("transform", "translate(" + p[0] + " " + p[1] + ") rotate(" + p[4] + ")");
  var cols = Math.max(1, Math.round(p[2] / CELL + 0.1));
  var rows = Math.max(1, Math.round(p[3] / CELL + 0.1));

  for (var i = 0; i < cols; i++) {
    for (var j = 0; j < rows; j++) {
      var u = (i - (cols - 1) / 2) / (cols / 2);
      var v = (j - (rows - 1) / 2) / (rows / 2);
      if (p[6] && u * u + v * v > 1) continue;
      // knock out some corner cubes so the edge steps like the real blocks
      var corner = Math.abs(u) > 0.7 && Math.abs(v) > 0.7;
      if (corner && rnd() < 0.35) continue;

      var x = (i - (cols - 1) / 2) * CELL + rnd() * 3 - 1.5;
      var y = (j - (rows - 1) / 2) * CELL + rnd() * 3 - 1.5;
      var g = p[5] + Math.round(rnd() * 20 - 10) + ((i + j) % 2 ? 6 : -4);
      var gray = "rgb(" + g + "," + g + "," + g + ")";
      addRect(group, x - CELL / 2 - 1, y - CELL / 2 - 1, CELL + 1, CELL + 1, gray, 0.72);
      // slim side of the cube, seen past its front face
      if (rnd() < 0.6) addRect(group, x - CELL / 2 + 2, y - CELL / 2 + 3, CELL - 2, CELL - 8, gray, 0.28);
    }
  }
  layer.appendChild(group);
});

gaps.forEach(function(p) {
  var group = document.createElementNS(NS, "g");
  group.setAttribute("transform", "translate(" + p[0] + " " + p[1] + ") rotate(" + p[4] + ")");
  addRect(group, -p[2] / 2, -p[3] / 2, p[2], p[3], "#fff", 1);
  layer.appendChild(group);
});
```
